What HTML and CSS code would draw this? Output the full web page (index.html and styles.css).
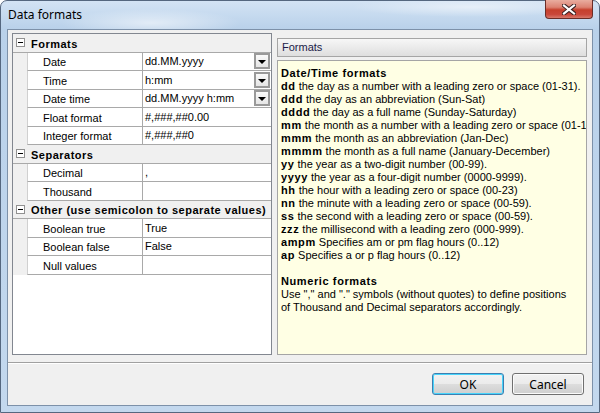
FILE: index.html
```html
<!DOCTYPE html>
<html lang="en">
<head>
  <meta charset="UTF-8" />
  <title>Data formats</title>
  <link rel="stylesheet" href="styles.css">
</head>
<body>
  <div class="window">
    <div class="titlebar">
      <span class="title">Data formats</span>
      <div class="close-btn">
        <svg width="14" height="11" viewBox="0 0 14 11">
          <path d="M2 1.5 L12 9.5 M12 1.5 L2 9.5" stroke="#3a2020" stroke-width="4.2" stroke-linecap="square" fill="none"/>
          <path d="M2 1.5 L12 9.5 M12 1.5 L2 9.5" stroke="#ffffff" stroke-width="2.2" stroke-linecap="square" fill="none"/>
        </svg>
      </div>
    </div>

    <div class="client">
      <div class="content">
        <div class="inspector">
          <div class="row header"><span class="toggle"></span><span class="cat">Formats</span></div>
          <div class="row item"><span class="gutter"></span><span class="name">Date</span><span class="value">dd.MM.yyyy<span class="drop"></span></span></div>
          <div class="row item"><span class="gutter"></span><span class="name">Time</span><span class="value">h:mm<span class="drop"></span></span></div>
          <div class="row item"><span class="gutter"></span><span class="name">Date time</span><span class="value">dd.MM.yyyy h:mm<span class="drop"></span></span></div>
          <div class="row item"><span class="gutter"></span><span class="name">Float format</span><span class="value">#,###,##0.00</span></div>
          <div class="row item"><span class="gutter"></span><span class="name">Integer format</span><span class="value">#,###,##0</span></div>

          <div class="row header"><span class="toggle"></span><span class="cat">Separators</span></div>
          <div class="row item"><span class="gutter"></span><span class="name">Decimal</span><span class="value">,</span></div>
          <div class="row item"><span class="gutter"></span><span class="name">Thousand</span><span class="value"></span></div>

          <div class="row header"><span class="toggle"></span><span class="cat">Other (use semicolon to separate values)</span></div>
          <div class="row item"><span class="gutter"></span><span class="name">Boolean true</span><span class="value">True</span></div>
          <div class="row item"><span class="gutter"></span><span class="name">Boolean false</span><span class="value">False</span></div>
          <div class="row item"><span class="gutter"></span><span class="name">Null values</span><span class="value"></span></div>
        </div>

        <div class="help-panel">
          <div class="help-title">Formats</div>
          <div class="help-body">
            <div class="line"><b>Date/Time formats</b></div>
            <div class="line"><b>dd</b> the day as a number with a leading zero or space (01-31).</div>
            <div class="line"><b>ddd</b> the day as an abbreviation (Sun-Sat)</div>
            <div class="line"><b>dddd</b> the day as a full name (Sunday-Saturday)</div>
            <div class="line"><b>mm</b> the month as a number with a leading zero or space (01-12)</div>
            <div class="line"><b>mmm</b> the month as an abbreviation (Jan-Dec)</div>
            <div class="line"><b>mmmm</b> the month as a full name (January-December)</div>
            <div class="line"><b>yy</b> the year as a two-digit number (00-99).</div>
            <div class="line"><b>yyyy</b> the year as a four-digit number (0000-9999).</div>
            <div class="line"><b>hh</b> the hour with a leading zero or space (00-23)</div>
            <div class="line"><b>nn</b> the minute with a leading zero or space (00-59).</div>
            <div class="line"><b>ss</b> the second with a leading zero or space (00-59).</div>
            <div class="line"><b>zzz</b> the millisecond with a leading zero (000-999).</div>
            <div class="line"><b>ampm</b> Specifies am or pm flag hours (0..12)</div>
            <div class="line"><b>ap</b> Specifies a or p flag hours (0..12)</div>
            <div class="line">&nbsp;</div>
            <div class="line"><b>Numeric formats</b></div>
            <div class="line">Use "," and "." symbols (without quotes) to define positions</div>
            <div class="line">of Thousand and Decimal separators accordingly.</div>
          </div>
        </div>
      </div>

      <div class="footer">
        <button class="btn default">OK</button>
        <button class="btn">Cancel</button>
      </div>
    </div>
  </div>
</body>
</html>
```

FILE: styles.css
```css
* {
  box-sizing: border-box;
  margin: 0;
  padding: 0;
}
body {
  width: 600px;
  height: 413px;
  overflow: hidden;
  background: #ffffff;
  font-family: "Liberation Sans", Arial, sans-serif;
  font-size: 11px;
  color: #000;
}
.window {
  width: 600px;
  height: 413px;
  display: flex;
  flex-direction: column;
  border: 1px solid #55677f;
  border-radius: 7px 7px 0 0;
  background:
    radial-gradient(ellipse 90px 14px at 150px 22px, rgba(255,255,255,0.55), rgba(255,255,255,0) 100%),
    radial-gradient(ellipse 120px 10px at 470px 6px, rgba(255,255,255,0.5), rgba(255,255,255,0) 100%),
    linear-gradient(to bottom, #d3e3f4 0, #b9d1ea 28px, #c3d8ee 100%);
}
.titlebar {
  height: 28px;
  display: flex;
  align-items: flex-start;
}
.title {
  font-family: "Noto Sans", "Open Sans", sans-serif;
  font-size: 12px;
  line-height: 28px;
  padding-left: 7px;
  color: #000;
}
.close-btn {
  margin-left: auto;
  margin-right: 6px;
  margin-top: -1px;
  width: 48px;
  height: 19px;
  border: 1px solid #6a2d27;
  border-top: none;
  border-radius: 0 0 4px 4px;
  background: linear-gradient(to bottom, #e9ad9f 0, #dc8272 40%, #c6402d 55%, #c9473a 80%, #d8786a 100%);
  display: flex;
  align-items: center;
  justify-content: center;
}
.client {
  flex: 1;
  margin: 0 6px 6px 6px;
  border: 1px solid #7d91a9;
  background: #f0f0f0;
  display: flex;
  flex-direction: column;
}
.content {
  flex: 1;
  display: flex;
  padding: 3px 5px 7px 4px;
  gap: 5px;
}

/* property inspector */
.inspector {
  width: 260px;
  border: 1px solid #828790;
  background: #ffffff;
}
.row {
  height: 18.5px;
  display: flex;
  align-items: stretch;
}
.row.header {
  background: #f0f0f0;
  border-bottom: 1px solid #a9a9a9;
  align-items: center;
}
.toggle {
  position: relative;
  width: 9px;
  height: 9px;
  margin-left: 3px;
  margin-right: 6px;
  border: 1px solid #919191;
  background: #ffffff;
}
.toggle::after {
  content: "";
  position: absolute;
  left: 1px;
  top: 3px;
  width: 5px;
  height: 1px;
  background: #000;
}
.cat {
  font-weight: bold;
  letter-spacing: 0.5px;
  padding-top: 2px;
}
.gutter {
  width: 14px;
  background: #f0f0f0;
}
.name {
  width: 116px;
  padding-left: 15px;
  padding-top: 2px;
  border-right: 1px solid #a9a9a9;
  border-bottom: 1px solid #a9a9a9;
  border-left: 1px solid #d0d0d0;
  display: flex;
  align-items: center;
  white-space: nowrap;
}
.value {
  flex: 1;
  padding-left: 2px;
  border-bottom: 1px solid #a9a9a9;
  display: flex;
  align-items: center;
  white-space: nowrap;
}
.drop {
  position: relative;
  margin-left: auto;
  margin-right: 1px;
  width: 16px;
  height: 16px;
  border: 2px solid #9a9a9a;
  background: linear-gradient(to bottom, #fafafa, #e6e6e6);
}
.drop::after {
  content: "";
  position: absolute;
  left: 2px;
  top: 5px;
  border-left: 4px solid transparent;
  border-right: 4px solid transparent;
  border-top: 4px solid #000;
}

/* help panel */
.help-panel {
  flex: 1;
  display: flex;
  flex-direction: column;
  padding-top: 5px;
  gap: 3px;
  min-width: 0;
}
.help-title {
  height: 19px;
  line-height: 17px;
  padding-left: 4px;
  color: #1b1b48;
  border: 1px solid #a5a5a5;
  background: linear-gradient(to bottom, #f7f7f7, #dedede);
}
.help-body {
  flex: 1;
  border: 1px solid #a5a5a5;
  background: #ffffe4;
  padding: 6px 3px;
  line-height: 13px;
  white-space: nowrap;
  overflow: hidden;
}
.help-body b {
  letter-spacing: 0.6px;
}

/* buttons */
.footer {
  height: 43px;
  border-top: 1px solid #a0a0a0;
  box-shadow: inset 0 1px 0 #ffffff;
  display: flex;
  justify-content: flex-end;
  align-items: flex-start;
  gap: 8px;
  padding: 10px 8px 0 0;
}
.btn {
  width: 72px;
  height: 22px;
  font-family: "Noto Sans", "Open Sans", sans-serif;
  font-size: 12px;
  color: #000;
  border: 1px solid #707070;
  border-radius: 3px;
  background: linear-gradient(to bottom, #f2f2f2 0, #ebebeb 50%, #dddddd 50%, #cfcfcf 100%);
  box-shadow: inset 0 0 0 1px #fbfbfb;
}
.btn.default {
  border-color: #3c7fb1;
  box-shadow: inset 0 0 0 1px #48d4fb;
}
```
